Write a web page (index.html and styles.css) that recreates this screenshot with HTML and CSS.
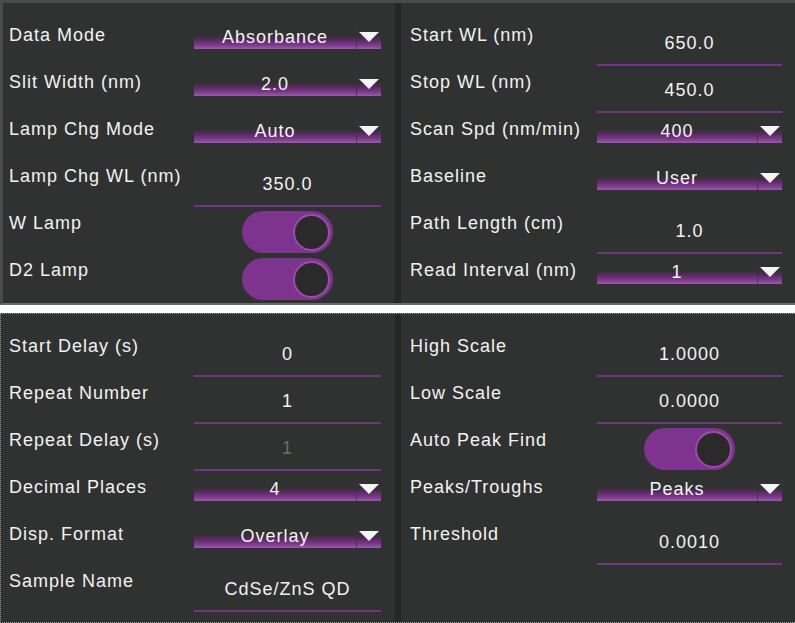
FILE: index.html
```html
<!DOCTYPE html>
<html lang="en">
<head>
    <meta charset="UTF-8">
    <meta name="viewport" content="width=device-width, initial-scale=1.0">
    <title>Scan Parameters</title>
    <link rel="stylesheet" href="styles.css">
</head>
<body>
    <div class="panel top">
        <div class="column left">
            <div class="row">
                <span class="label">Data Mode</span>
                <div class="dropdown"><span class="value">Absorbance</span><span class="arrow"></span></div>
            </div>
            <div class="row">
                <span class="label">Slit Width (nm)</span>
                <div class="dropdown"><span class="value">2.0</span><span class="arrow"></span></div>
            </div>
            <div class="row">
                <span class="label">Lamp Chg Mode</span>
                <div class="dropdown"><span class="value">Auto</span><span class="arrow"></span></div>
            </div>
            <div class="row">
                <span class="label">Lamp Chg WL (nm)</span>
                <div class="input">350.0</div>
            </div>
            <div class="row">
                <span class="label">W Lamp</span>
                <div class="switch-wrap"><div class="switch on"><span class="knob"></span></div></div>
            </div>
            <div class="row">
                <span class="label">D2 Lamp</span>
                <div class="switch-wrap"><div class="switch on"><span class="knob"></span></div></div>
            </div>
        </div>
        <div class="divider"></div>
        <div class="column right">
            <div class="row">
                <span class="label">Start WL (nm)</span>
                <div class="input">650.0</div>
            </div>
            <div class="row">
                <span class="label">Stop WL (nm)</span>
                <div class="input">450.0</div>
            </div>
            <div class="row">
                <span class="label">Scan Spd (nm/min)</span>
                <div class="dropdown"><span class="value">400</span><span class="arrow"></span></div>
            </div>
            <div class="row">
                <span class="label">Baseline</span>
                <div class="dropdown"><span class="value">User</span><span class="arrow"></span></div>
            </div>
            <div class="row">
                <span class="label">Path Length (cm)</span>
                <div class="input">1.0</div>
            </div>
            <div class="row">
                <span class="label">Read Interval (nm)</span>
                <div class="dropdown"><span class="value">1</span><span class="arrow"></span></div>
            </div>
        </div>
    </div>

    <div class="panel bottom">
        <div class="column left">
            <div class="row">
                <span class="label">Start Delay (s)</span>
                <div class="input">0</div>
            </div>
            <div class="row">
                <span class="label">Repeat Number</span>
                <div class="input">1</div>
            </div>
            <div class="row">
                <span class="label">Repeat Delay (s)</span>
                <div class="input disabled">1</div>
            </div>
            <div class="row">
                <span class="label">Decimal Places</span>
                <div class="dropdown"><span class="value">4</span><span class="arrow"></span></div>
            </div>
            <div class="row">
                <span class="label">Disp. Format</span>
                <div class="dropdown"><span class="value">Overlay</span><span class="arrow"></span></div>
            </div>
            <div class="row">
                <span class="label">Sample Name</span>
                <div class="input">CdSe/ZnS QD</div>
            </div>
        </div>
        <div class="divider"></div>
        <div class="column right">
            <div class="row">
                <span class="label">High Scale</span>
                <div class="input">1.0000</div>
            </div>
            <div class="row">
                <span class="label">Low Scale</span>
                <div class="input">0.0000</div>
            </div>
            <div class="row">
                <span class="label">Auto Peak Find</span>
                <div class="switch-wrap"><div class="switch on"><span class="knob"></span></div></div>
            </div>
            <div class="row">
                <span class="label">Peaks/Troughs</span>
                <div class="dropdown"><span class="value">Peaks</span><span class="arrow"></span></div>
            </div>
            <div class="row">
                <span class="label">Threshold</span>
                <div class="input">0.0010</div>
            </div>
        </div>
    </div>
</body>
</html>
```

FILE: styles.css
```css
body {
    margin: 0;
    padding: 0;
    background-color: #fff;
    font-family: "Liberation Sans", Arial, sans-serif;
    font-size: 18px;
    letter-spacing: 1px;
    color: #f2f2f2;
    width: 795px;
}
.panel {
    display: grid;
    grid-template-columns: 1fr 6px 394px;
    background-color: #2f3230;
    box-sizing: border-box;
}
.panel.top {
    height: 305px;
    border-top: 3px solid #4a4c4b;
    border-left: 3px solid #4a4c4b;
    border-bottom: 2px solid #6a6c6b;
    padding: 9px 0 9px 0;
}
.panel.bottom {
    height: 310px;
    margin-top: 8px;
    border: 1px dotted #9a9a9a;
    border-right: none;
    padding: 9px 0 17px 0;
}
.divider {
    background-color: #252726;
}
.panel.top .divider {
    margin: -9px 0 -9px 0;
}
.panel.bottom .divider {
    margin: -9px 0 -17px 0;
}
.column.left {
    padding: 0 14px 0 6px;
}
.panel.bottom .column.left {
    padding-left: 8px;
}
.column.right {
    padding: 0 13px 0 9px;
}
.row {
    display: flex;
    align-items: flex-start;
    justify-content: space-between;
    height: 47px;
}
.label {
    margin-top: 12px;
    line-height: 22px;
    white-space: nowrap;
}
.column.left .input,
.column.left .dropdown,
.column.left .switch-wrap {
    width: 187px;
}
.column.right .input,
.column.right .dropdown,
.column.right .switch-wrap {
    width: 185px;
}
.input {
    margin-top: 19px;
    line-height: 24px;
    padding-bottom: 9px;
    text-align: center;
    border-bottom: 2px solid #6c3a7a;
}
.input.disabled {
    color: #6b6d6b;
}
.dropdown {
    display: flex;
    align-items: flex-start;
    margin-top: 13px;
    height: 24px;
    background: linear-gradient(to bottom, rgba(126, 58, 142, 0) 0, rgba(126, 58, 142, 0) 45%, #55285e 60%, #7c3a8c 84%, #9b5ba9 100%);
}
.dropdown .value {
    flex: 1;
    line-height: 24px;
    text-align: center;
}
.dropdown .arrow {
    width: 25px;
    height: 24px;
    border-left: 1px solid rgba(70, 40, 76, 0.7);
    box-sizing: border-box;
    position: relative;
}
.dropdown .arrow::after {
    content: "";
    position: absolute;
    top: 7px;
    right: 2px;
    border-left: 10px solid transparent;
    border-right: 10px solid transparent;
    border-top: 10px solid #f4f4f4;
}
.switch-wrap {
    display: flex;
    justify-content: center;
    margin-top: 11px;
}
.switch {
    display: flex;
    align-items: center;
    justify-content: flex-end;
    width: 91px;
    height: 42px;
    padding-right: 3px;
    box-sizing: border-box;
    border-radius: 21px;
    background-color: #7e348f;
}
.knob {
    width: 37px;
    height: 37px;
    box-sizing: border-box;
    border-radius: 50%;
    background-color: #2a2a2a;
    border: 2px solid #9a4cab;
}
```
